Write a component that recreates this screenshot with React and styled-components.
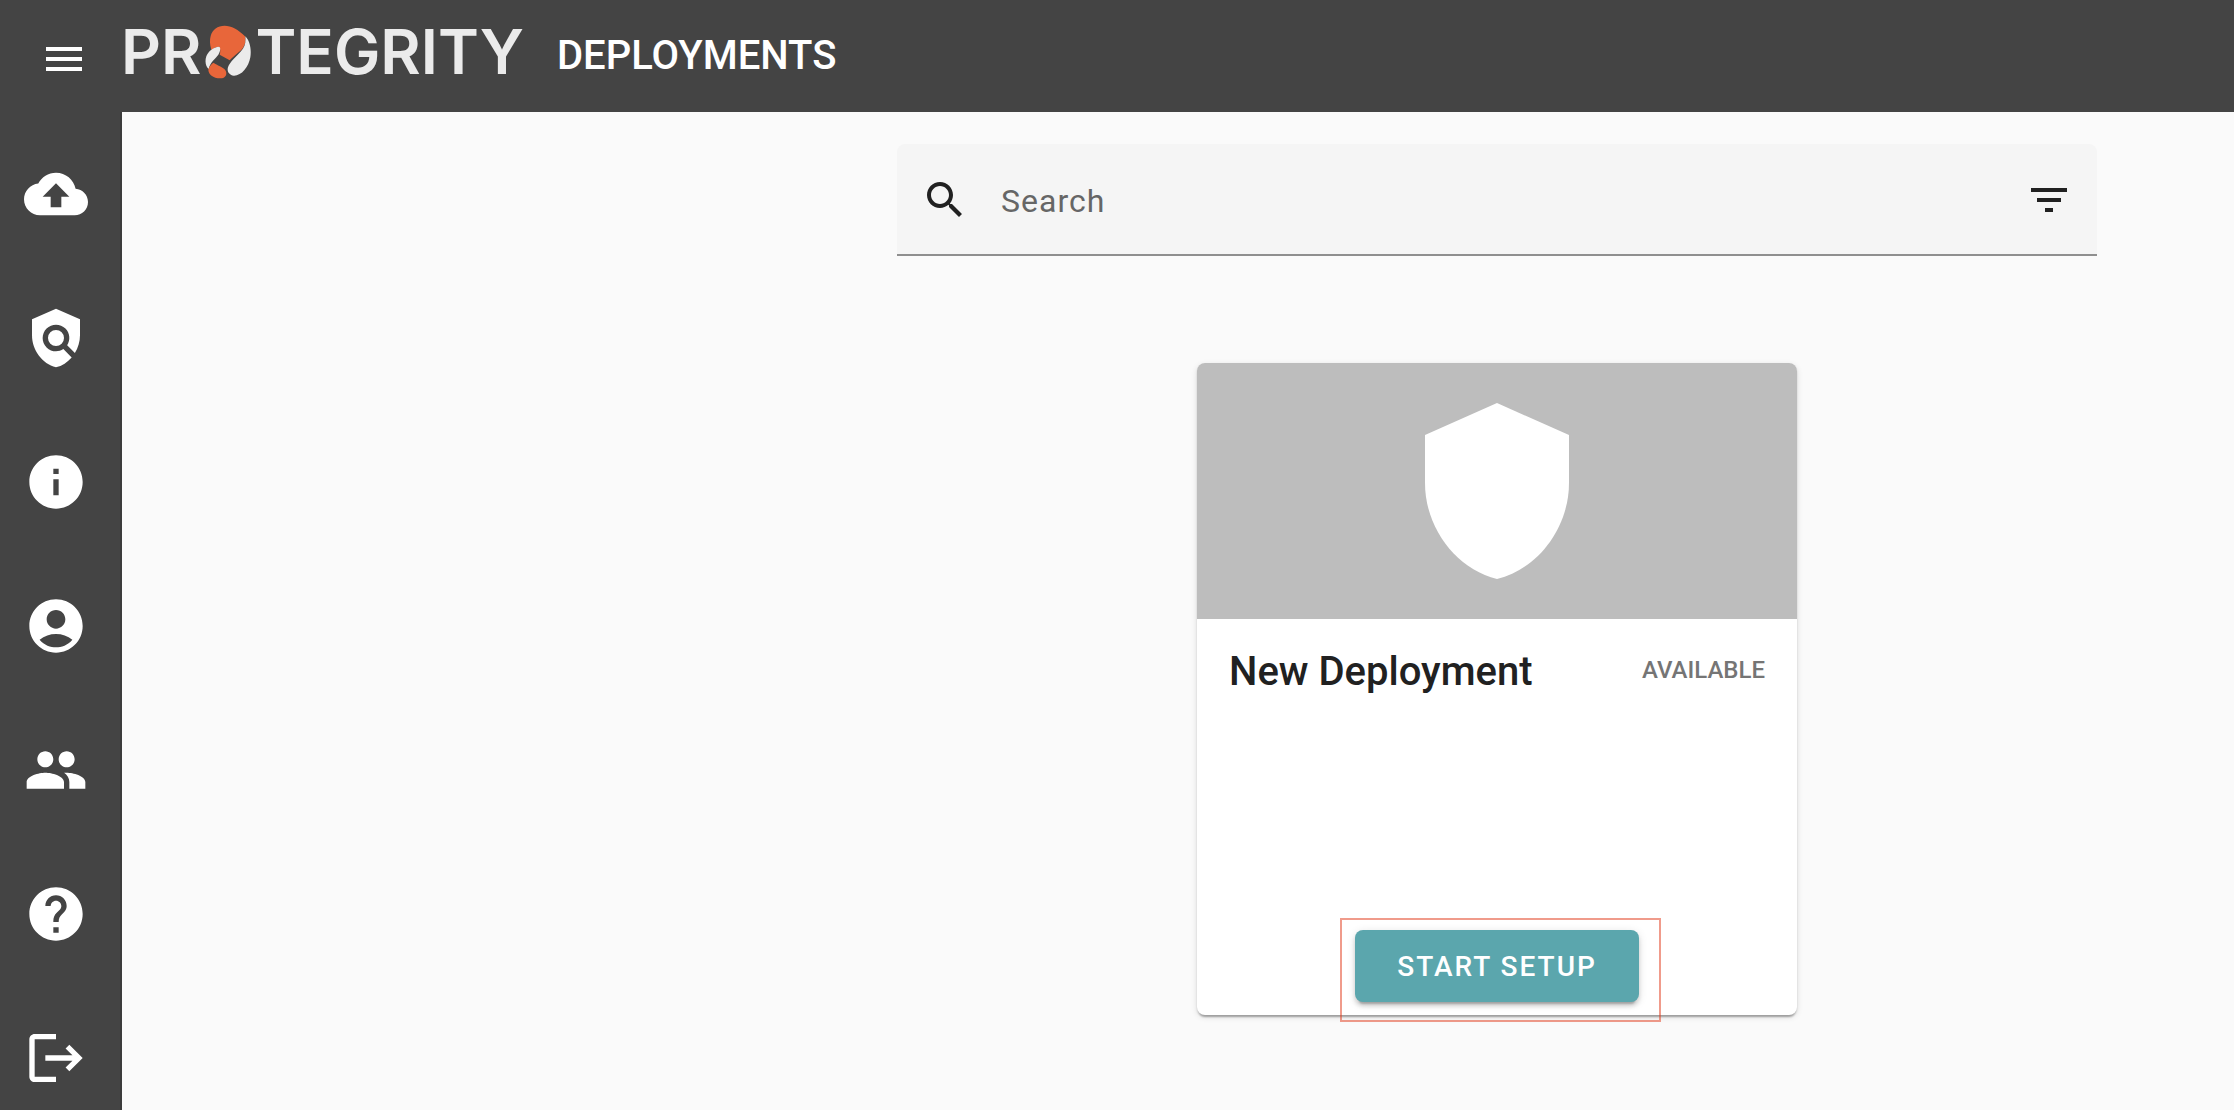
import React from "react";
import styled, { createGlobalStyle } from "styled-components";

const GlobalStyle = createGlobalStyle`
  * { box-sizing: border-box; }
  body {
    margin: 0;
    background: #fafafa;
    color: #212121;
    font-family: Roboto, "Liberation Sans", sans-serif;
  }
`;

const Shell = styled.div`
  display: grid;
  grid-template: auto 1fr / 122px 1fr;
  min-height: 100vh;
`;

const Header = styled.header`
  grid-column: 1 / -1;
  display: flex;
  align-items: center;
  height: 112px;
  padding: 0 40px;
  background: #444;
  color: #fff;
`;

const IconButton = styled.button`
  display: flex;
  padding: 0;
  border: 0;
  background: none;
  color: inherit;
  cursor: pointer;
`;

const MenuButton = styled(IconButton)`
  margin-top: 6px;
`;

const Icon = styled.svg`
  display: block;
  flex: none;
  width: ${(p) => p.$size}px;
  height: ${(p) => p.$size}px;
  fill: currentColor;
`;

const Logo = styled.a`
  display: flex;
  align-items: center;
  gap: 4px;
  width: 404px;
  margin: 0 32px 8px 33px;
  color: #ebebeb;
  font: 600 62px/64px Inter, "Liberation Sans", sans-serif;
  text-decoration: none;
`;

const LogoMark = styled.svg`
  flex: none;
  width: 46px;
  height: 54px;
`;

const Title = styled.h1`
  margin: 0;
  font-size: 40px;
  font-weight: 500;
  line-height: 48px;
`;

const Sidebar = styled.nav`
  display: flex;
  flex-direction: column;
  gap: 80px;
  padding: 50px 24px 20px;
  border-right: 2px solid #3c3c3c;
  background: #444;
`;

const NavLink = styled.a`
  display: block;
  width: 64px;
  height: 64px;
  color: #fff;
`;

const Main = styled.main`
  display: flex;
  flex-direction: column;
  align-items: center;
  gap: 107px;
  padding: 32px 0 32px 638px;
`;

const SearchBar = styled.form`
  display: flex;
  align-items: center;
  gap: 32px;
  width: 100%;
  max-width: 1200px;
  height: 112px;
  padding: 2px 24px 0;
  border-bottom: 2px solid #8f8f8f;
  border-radius: 8px 8px 0 0;
  background: #f5f5f5;
`;

const SearchLabel = styled.label`
  display: flex;
`;

const SearchInput = styled.input`
  flex: 1;
  min-width: 0;
  padding: 2px 0 0;
  border: 0;
  outline: 0;
  background: none;
  color: #212121;
  font: 400 32px/48px Roboto, "Liberation Sans", sans-serif;
  letter-spacing: 1px;

  &::placeholder {
    color: #666;
    opacity: 1;
  }
`;

const Card = styled.article`
  display: flex;
  flex-direction: column;
  width: 600px;
  height: 652px;
  padding-bottom: 13px;
  border-radius: 8px;
  background: #fff;
  box-shadow: 0 4px 2px -2px rgba(0, 0, 0, 0.2), 0 2px 2px rgba(0, 0, 0, 0.14),
    0 2px 6px rgba(0, 0, 0, 0.12);
`;

const CardMedia = styled.div`
  display: flex;
  align-items: center;
  justify-content: center;
  height: 256px;
  border-radius: 8px 8px 0 0;
  background: #bdbdbd;
  color: #fff;
`;

const CardHeading = styled.div`
  display: flex;
  align-items: flex-start;
  justify-content: space-between;
  padding: 28px 32px;
`;

const CardTitle = styled.h2`
  margin: 0;
  font-size: 40px;
  font-weight: 500;
  line-height: 50px;
`;

const Status = styled.span`
  color: #757575;
  font-size: 24px;
  font-weight: 500;
  line-height: 46px;
`;

const CardAction = styled.div`
  position: relative;
  align-self: center;
  margin-top: auto;
`;

const SetupButton = styled.button`
  display: block;
  width: 284px;
  height: 72px;
  padding: 2px 0 0;
  border: 0;
  border-radius: 8px;
  background: #5ba6ad;
  box-shadow: 0 6px 2px -4px rgba(0, 0, 0, 0.2), 0 4px 4px rgba(0, 0, 0, 0.14),
    0 2px 10px rgba(0, 0, 0, 0.12);
  color: #fff;
  font: 500 28px/40px Roboto, "Liberation Sans", sans-serif;
  letter-spacing: 2px;
  cursor: pointer;
`;

const Highlight = styled.span`
  position: absolute;
  inset: -12px -22px -20px -15px;
  border: 2px solid rgba(226, 56, 24, 0.5);
  pointer-events: none;
`;

const paths = {
  menu: "M3 18h18v-2H3v2zm0-5h18v-2H3v2zm0-7v2h18V6H3z",
  upload:
    "M19.35 10.04C18.67 6.59 15.64 4 12 4 9.11 4 6.6 5.64 5.35 8.04 2.34 8.36 0 10.91 0 14c0 3.31 2.69 6 6 6h13c2.76 0 5-2.24 5-5 0-2.64-2.05-4.78-4.65-4.96zM14 13v4h-4v-4H7l5-5 5 5h-3z",
  policy:
    "M21 5l-9-4-9 4v6c0 5.55 3.84 10.74 9 12 2.3-.56 4.33-1.9 5.88-3.71l-3.12-3.12c-1.94 1.29-4.58 1.07-6.29-.64-1.95-1.95-1.95-5.12 0-7.07 1.95-1.95 5.12-1.95 7.07 0 1.71 1.71 1.92 4.35.64 6.29l2.9 2.9C20.29 15.69 21 13.38 21 11V5zM12 9a3 3 0 1 0 0 6 3 3 0 0 0 0-6z",
  info:
    "M12 2C6.48 2 2 6.48 2 12s4.48 10 10 10 10-4.48 10-10S17.52 2 12 2zm1 15h-2v-6h2v6zm0-8h-2V7h2v2z",
  account:
    "M12 2C6.48 2 2 6.48 2 12s4.48 10 10 10 10-4.48 10-10S17.52 2 12 2zm0 4c1.93 0 3.5 1.57 3.5 3.5S13.93 13 12 13s-3.5-1.57-3.5-3.5S10.07 6 12 6zm0 14c-2.03 0-4.43-.82-6.14-2.88a9.947 9.947 0 0 1 12.28 0C16.43 19.18 14.03 20 12 20z",
  people:
    "M16 11c1.66 0 2.99-1.34 2.99-3S17.66 5 16 5c-1.66 0-3 1.34-3 3s1.34 3 3 3zm-8 0c1.66 0 2.99-1.34 2.99-3S9.66 5 8 5C6.34 5 5 6.34 5 8s1.34 3 3 3zm0 2c-2.33 0-7 1.17-7 3.5V19h14v-2.5c0-2.33-4.67-3.5-7-3.5zm8 0c-.29 0-.62.02-.97.05 1.16.84 1.97 1.97 1.97 3.45V19h6v-2.5c0-2.33-4.67-3.5-7-3.5z",
  help:
    "M12 2C6.48 2 2 6.48 2 12s4.48 10 10 10 10-4.48 10-10S17.52 2 12 2zm1 17h-2v-2h2v2zm2.07-7.75l-.9.92C13.45 12.9 13 13.5 13 15h-2v-.5c0-1.1.45-2.1 1.17-2.83l1.24-1.26c.37-.36.59-.86.59-1.41 0-1.1-.9-2-2-2s-2 .9-2 2H8c0-2.21 1.79-4 4-4s4 1.79 4 4c0 .88-.36 1.68-.93 2.25z",
  logout:
    "M17 7l-1.41 1.41L18.17 11H8v2h10.17l-2.58 2.58L17 17l5-5zM4 5h8V3H4c-1.1 0-2 .9-2 2v14c0 1.1.9 2 2 2h8v-2H4V5z",
  search:
    "M15.5 14h-.79l-.28-.27C15.41 12.59 16 11.11 16 9.5 16 5.91 13.09 3 9.5 3S3 5.91 3 9.5 5.91 16 9.5 16c1.61 0 3.09-.59 4.23-1.57l.27.28v.79l5 4.99L20.49 19l-4.99-5zm-6 0C7.01 14 5 11.99 5 9.5S7.01 5 9.5 5 14 7.01 14 9.5 11.99 14 9.5 14z",
  filter: "M10 18h4v-2h-4v2zM3 6v2h18V6H3zm3 7h12v-2H6v2z",
  shield: "M12 1L3 5v6c0 5.55 3.84 10.74 9 12 5.16-1.26 9-6.45 9-12V5l-9-4z",
};

function Glyph({ name, size }) {
  return (
    <Icon $size={size} viewBox="0 0 24 24" aria-hidden="true">
      <path d={paths[name]} />
    </Icon>
  );
}

const navItems = [
  ["upload", "Deployments"],
  ["policy", "Policy"],
  ["info", "Information"],
  ["account", "Account"],
  ["people", "Users"],
  ["help", "Help"],
  ["logout", "Log out"],
];

export default function App() {
  return (
    <>
      <GlobalStyle />
      <Shell>
        <Header>
          <MenuButton type="button" aria-label="Menu">
            <Glyph name="menu" size={48} />
          </MenuButton>
          <Logo href="#" aria-label="Protegrity">
            <span>PR</span>
            <LogoMark viewBox="24 18 138 162" aria-hidden="true">
              <path
                fill="#e8663a"
                d="M83 20C102 20 125 32 144 52C148 66 144 82 132 94C120 104 108 114 98 124L68 107C71 98 70 87 67 83C60 83 52 86 43 92C38 76 38 62 41 51C46 32 62 20 83 20Z"
              />
              <path
                fill="#ebebeb"
                d="M66 83C72 84 70 98 64 107C57 118 40 128 35 150C28 145 22 130 28 112C34 96 50 84 66 83Z"
              />
              <path
                fill="#e8663a"
                d="M50 131C59 139 79 143 86 155C91 165 87 178 70 178C48 178 34 165 34 152C35 146 44 133 50 131Z"
              />
              <path
                fill="#ebebeb"
                d="M145 52C158 65 164 90 160 115C155 145 133 171 110 170C97 168 89 157 93 145C98 129 120 111 132 97C144 84 147 70 145 52Z"
              />
            </LogoMark>
            <span>TEGRITY</span>
          </Logo>
          <Title>DEPLOYMENTS</Title>
        </Header>
        <Sidebar aria-label="Main">
          {navItems.map(([name, label]) => (
            <NavLink key={name} href="#" aria-label={label}>
              <Glyph name={name} size={64} />
            </NavLink>
          ))}
        </Sidebar>
        <Main>
          <SearchBar onSubmit={(e) => e.preventDefault()}>
            <SearchLabel htmlFor="search" aria-label="Search">
              <Glyph name="search" size={48} />
            </SearchLabel>
            <SearchInput id="search" type="text" placeholder="Search" />
            <IconButton type="button" aria-label="Filter">
              <Glyph name="filter" size={48} />
            </IconButton>
          </SearchBar>
          <Card>
            <CardMedia>
              <Glyph name="shield" size={192} />
            </CardMedia>
            <CardHeading>
              <CardTitle>New Deployment</CardTitle>
              <Status>AVAILABLE</Status>
            </CardHeading>
            <CardAction>
              <SetupButton type="button">START SETUP</SetupButton>
              <Highlight />
            </CardAction>
          </Card>
        </Main>
      </Shell>
    </>
  );
}
